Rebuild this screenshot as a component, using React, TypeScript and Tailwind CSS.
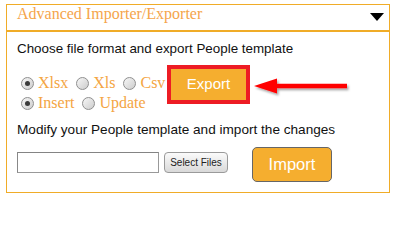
import React from "react";

const sans = { fontFamily: '"Liberation Sans", Arial, sans-serif' };

function Radio({ checked, label }: { checked?: boolean; label: string }) {
  return (
    <span className="inline-flex items-center">
      <span className="ml-[4px] mr-[4px] flex h-[13px] w-[13px] items-center justify-center rounded-full border border-[#8f8f8f] bg-linear-to-br from-[#f7f7f7] to-[#cdcdcd]">
        {checked && <span className="h-[5px] w-[5px] rounded-full bg-[#3a3a3a]" />}
      </span>
      <span className="font-['Liberation_Serif',serif] text-[16px] leading-[20px] text-[#f4a543]">
        {label}
      </span>
    </span>
  );
}

function Arrow() {
  return (
    <svg width="98" height="22" viewBox="0 0 98 22" className="ml-[4px] mt-[13px]">
      <defs>
        <filter id="sh" x="-10%" y="-30%" width="120%" height="170%">
          <feDropShadow dx="1.5" dy="2" stdDeviation="1.2" floodColor="#000" floodOpacity="0.35" />
        </filter>
      </defs>
      <polygon
        points="0,8 23,0.5 23,5.8 93,5.8 93,10.2 23,10.2 23,15.5"
        fill="#ff0000"
        filter="url(#sh)"
      />
    </svg>
  );
}

export default function App() {
  return (
    <div className="h-[203px] w-[399px] bg-white pl-[6px] pt-[4px]">
      <div className="w-[384px] border border-[#f0ac28]">
        <div className="flex h-[27px] items-start justify-between border-b-2 border-[#f0ac28] pl-[10px] pr-[5px]">
          <span className="pt-[1px] font-['Liberation_Serif',serif] text-[16px] leading-[16px] text-[#f5a54b]">
            Advanced Importer/Exporter
          </span>
          <svg width="14" height="8" viewBox="0 0 14 8" className="mt-[8px]">
            <polygon points="0,0 14,0 7,8" fill="#000" />
          </svg>
        </div>

        <div className="pb-[10px] pl-[10px] pt-[8px]" style={sans}>
          <p className="text-[13.4px] leading-[18px] text-[#111]">
            Choose file format and export People template
          </p>

          <div className="mt-[7px] flex items-start">
            <div className="mt-[8px] w-[150px]">
              <div className="flex h-[20px] items-center gap-[4px]">
                <Radio checked label="Xlsx" />
                <Radio label="Xls" />
                <Radio label="Csv" />
              </div>
              <div className="flex h-[20px] items-center gap-[4px]">
                <Radio checked label="Insert" />
                <Radio label="Update" />
              </div>
            </div>
            <div className="border-4 border-[#ed1c24]">
              <div className="flex h-[31px] w-[75px] items-center justify-center bg-[#f5ae2f] text-[15px] text-white">
                Export
              </div>
            </div>
            <Arrow />
          </div>

          <p className="mt-[8px] text-[13.6px] leading-[18px] text-[#111]">
            Modify your People template and import the changes
          </p>

          <div className="mt-[8px] flex items-start">
            <input
              type="text"
              className="mt-[5px] h-[21px] w-[142px] border border-[#999] border-l-[#888] border-t-[#848484] bg-white outline-none"
            />
            <button className="ml-[5px] mt-[5px] h-[21px] w-[64px] rounded-[4px] border border-[#9a9a9a] bg-linear-to-b from-[#fbfbfb] to-[#d9d9d9] text-[10px] leading-none text-[#222]">
              Select Files
            </button>
            <button className="ml-[24px] h-[35px] w-[80px] rounded-[5px] border border-[#666] bg-[#f5ae2f] text-[16.5px] text-white">
              Import
            </button>
          </div>
        </div>
      </div>
    </div>
  );
}
